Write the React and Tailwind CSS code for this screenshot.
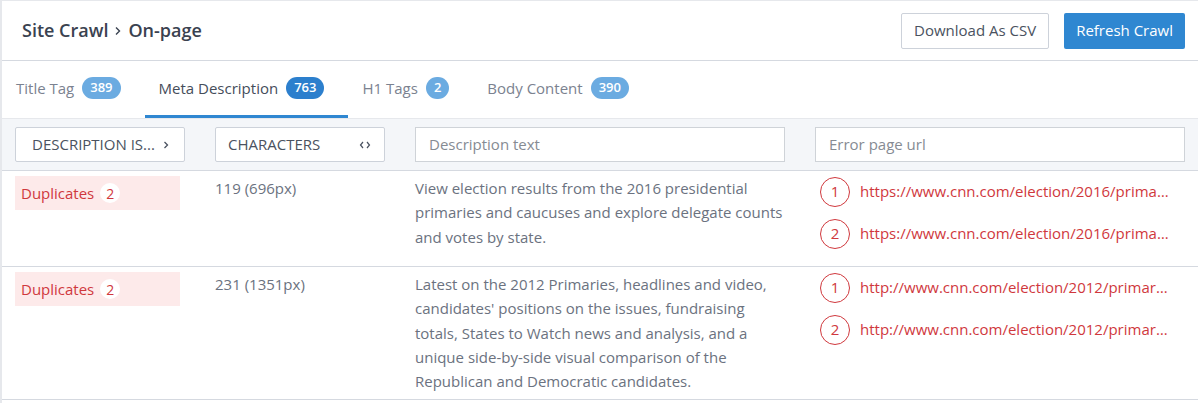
import React from "react";

const tabs = [
  { label: "Title Tag", count: "389", active: false },
  { label: "Meta Description", count: "763", active: true },
  { label: "H1 Tags", count: "2", active: false },
  { label: "Body Content", count: "390", active: false },
];

const rows = [
  {
    chars: "119 (696px)",
    text: "View election results from the 2016 presidential primaries and caucuses and explore delegate counts and votes by state.",
    urls: [
      "https://www.cnn.com/election/2016/primaries/states",
      "https://www.cnn.com/election/2016/primaries/parties",
    ],
  },
  {
    chars: "231 (1351px)",
    text: "Latest on the 2012 Primaries, headlines and video, candidates' positions on the issues, fundraising totals, States to Watch news and analysis, and a unique side-by-side visual comparison of the Republican and Democratic candidates.",
    urls: [
      "http://www.cnn.com/election/2012/primaries/index.html",
      "http://www.cnn.com/election/2012/primaries/states/",
    ],
  },
];

export default function App() {
  return (
    <div
      className="w-[1198px] h-[403px] bg-white border-t border-l-2 border-[#e6e8ec] overflow-hidden"
      style={{ fontFamily: '"Open Sans", "Liberation Sans", sans-serif' }}
    >
      {/* Header */}
      <div className="h-[60px] flex items-center justify-between pl-[20px] pr-[13px] border-b border-[#d5d9e0]">
        <div className="flex items-center text-[18px] font-semibold text-[#3a4250]">
          <span>Site Crawl</span>
          <svg width="8" height="10" viewBox="0 0 8 10" className="mx-[6px]">
            <path d="M2 1.5 L5.5 5 L2 8.5" fill="none" stroke="#3a4250" strokeWidth="1.4" />
          </svg>
          <span>On-page</span>
        </div>
        <div className="flex items-center gap-[15px]">
          <button className="h-[36px] px-[12px] border border-[#cdd2da] rounded-[2px] bg-white text-[15px] text-[#4a5260]">
            Download As CSV
          </button>
          <button className="h-[36px] px-[12px] rounded-[2px] bg-[#2f87d1] text-[15px] text-white">
            Refresh Crawl
          </button>
        </div>
      </div>

      {/* Tabs */}
      <div className="h-[57px] flex items-stretch">
        {tabs.map((t) => (
          <div
            key={t.label}
            className={
              "flex items-center pl-[14px] pr-[24px] border-b-[3px] " +
              (t.active ? "border-[#2f87d1] text-[#454d5a]" : "border-transparent text-[#7b8290]")
            }
          >
            <span className="text-[15px]">{t.label}</span>
            <span
              className={
                "ml-[8px] h-[22px] min-w-[22px] px-[8px] rounded-full flex items-center justify-center text-[13px] font-semibold text-white " +
                (t.active ? "bg-[#2c7fcd]" : "bg-[#6babe1]")
              }
            >
              {t.count}
            </span>
          </div>
        ))}
      </div>

      {/* Filters */}
      <div className="h-[53px] bg-[#f4f6f9] border-t border-[#e6e8ec] border-b border-b-[#d5d9e0] flex items-center gap-[30px] pl-[13px] pr-[13px]">
        <div className="w-[170px] h-[35px] bg-white border border-[#cdd2da] rounded-[2px] flex items-center justify-between pl-[16px] pr-[14px] text-[15px] text-[#4a5260]">
          <span>DESCRIPTION IS...</span>
          <svg width="8" height="10" viewBox="0 0 8 10">
            <path d="M2.5 2 L5.5 5 L2.5 8" fill="none" stroke="#4a5260" strokeWidth="1.3" />
          </svg>
        </div>
        <div className="w-[170px] h-[35px] bg-white border border-[#cdd2da] rounded-[2px] flex items-center justify-between pl-[12px] pr-[13px] text-[15px] text-[#4a5260]">
          <span>CHARACTERS</span>
          <svg width="12" height="10" viewBox="0 0 12 10">
            <path d="M4 2 L1.5 5 L4 8 M8 2 L10.5 5 L8 8" fill="none" stroke="#4a5260" strokeWidth="1.2" />
          </svg>
        </div>
        <div className="w-[370px] h-[35px] bg-white border border-[#cfd3d8] flex items-center pl-[13px] text-[15px] text-[#868b93]">
          Description text
        </div>
        <div className="w-[370px] h-[35px] bg-white border border-[#cfd3d8] flex items-center pl-[13px] text-[15px] text-[#868b93]">
          Error page url
        </div>
      </div>

      {/* Rows */}
      {rows.map((r, i) => (
        <div key={i} className="flex gap-[30px] pl-[13px] pr-[13px] pt-[5px] pb-[6px] border-b border-[#d5d9e0]">
          <div className="w-[170px] shrink-0">
            <div className="w-[165px] h-[34px] bg-[#fdeaea] flex items-center pl-[6px] text-[15px] text-[#d0383d]">
              <span>Duplicates</span>
              <span className="ml-[6px] w-[20px] h-[20px] rounded-full bg-white flex items-center justify-center text-[14px]">
                2
              </span>
            </div>
          </div>
          <div className="w-[170px] shrink-0 text-[15px] leading-[24.25px] text-[#6b7280]">{r.chars}</div>
          <div className="w-[370px] shrink-0 text-[15px] leading-[24.25px] text-[#6b7280]">{r.text}</div>
          <div className="w-[370px] shrink-0 pl-[5px] pr-[15px]">
            {r.urls.map((u, j) => (
              <div key={j} className="flex items-center h-[31px] mb-[11px]">
                <span className="w-[30px] h-[30px] shrink-0 rounded-full border border-[#d0383d] flex items-center justify-center text-[15px] text-[#d0383d]">
                  {j + 1}
                </span>
                <span className="ml-[10px] truncate text-[15px] text-[#d0383d]">{u}</span>
              </div>
            ))}
          </div>
        </div>
      ))}
    </div>
  );
}
